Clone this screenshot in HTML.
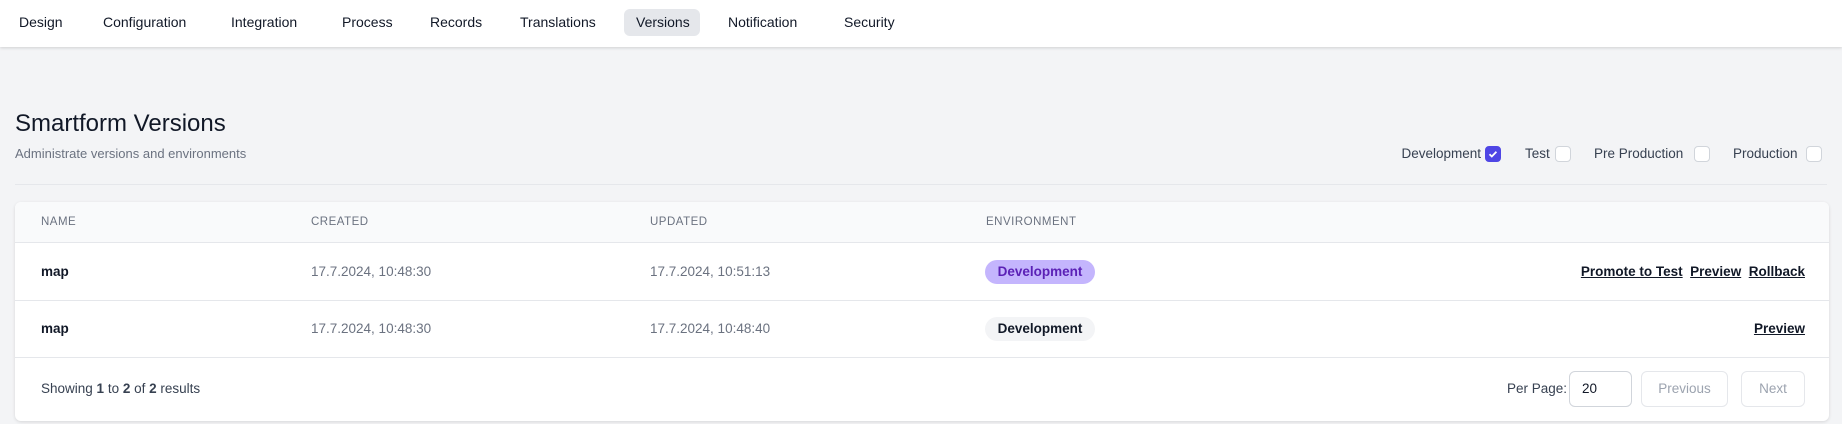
<!DOCTYPE html>
<html><head><meta charset="utf-8"><style>
*{box-sizing:border-box;margin:0;padding:0}
body{width:1842px;height:424px;overflow:hidden;background:#f3f4f6;font-family:"Liberation Sans",sans-serif;color:#111827;position:relative}
.nav{position:absolute;left:0;top:0;width:1842px;height:47px;background:#fff;box-shadow:0 1px 3px rgba(0,0,0,.15)}
.tab{position:absolute;top:9px;height:27px;line-height:27px;font-size:14px;color:#111827}
.pill{background:#e5e7eb;border-radius:6px;padding:0 12px}
.abs{position:absolute;white-space:nowrap}
h1{position:absolute;left:15px;top:110px;font-size:24px;font-weight:normal;color:#111827}
.sub{left:15px;top:146px;font-size:13px;color:#6b7280}
.hr{position:absolute;left:15px;top:184px;width:1812px;height:1px;background:#e5e7eb}
.cb{position:absolute;top:146px;width:16px;height:16px;border:1px solid #d1d5db;border-radius:4px;background:#fff}
.lbl{top:146px;font-size:13.5px;color:#374151}
.card{position:absolute;left:15px;top:202px;width:1814px;height:219px;background:#fff;border-radius:6px;box-shadow:0 1px 3px rgba(0,0,0,.12);overflow:hidden}
.thead{position:absolute;left:0;top:0;width:100%;height:41px;background:#f9fafb;border-bottom:1px solid #e5e7eb}
.th{top:14px;font-size:11.5px;color:#6b7280;letter-spacing:.5px}
.line{position:absolute;left:0;width:100%;height:1px;background:#e5e7eb}
.td{font-size:13.5px;color:#6b7280}
.b{font-weight:bold;color:#111827}
.badge{position:absolute;left:970px;width:110px;height:24px;line-height:24px;text-align:center;border-radius:12px;font-size:13.5px;font-weight:bold}
.lnk{font-size:13.5px;font-weight:bold;color:#111827}
.lnk u{text-decoration:underline}
.btn{position:absolute;top:169px;height:36px;border:1px solid #e5e7eb;border-radius:6px;line-height:34px;text-align:center;font-size:13.5px;color:#9ca3af}
</style></head><body>
<div class="nav">
<span class="tab" style="left:19px">Design</span>
<span class="tab" style="left:103px">Configuration</span>
<span class="tab" style="left:231px">Integration</span>
<span class="tab" style="left:342px">Process</span>
<span class="tab" style="left:430px">Records</span>
<span class="tab" style="left:520px">Translations</span>
<span class="tab pill" style="left:624px;width:76px">Versions</span>
<span class="tab" style="left:728px">Notification</span>
<span class="tab" style="left:844px">Security</span>
</div>
<h1>Smartform Versions</h1>
<span class="abs sub">Administrate versions and environments</span>
<span class="abs lbl" style="right:361px">Development</span>
<div class="cb" style="left:1485px;background:#4f46e5;border-color:#4f46e5"><svg width="14" height="14" viewBox="0 0 14 14"><path d="M3.5 7.2l2.3 2.3 4.6-4.8" stroke="#fff" stroke-width="1.8" fill="none"/></svg></div>
<span class="abs lbl" style="left:1525px">Test</span>
<div class="cb" style="left:1555px"></div>
<span class="abs lbl" style="left:1594px">Pre Production</span>
<div class="cb" style="left:1694px"></div>
<span class="abs lbl" style="left:1733px">Production</span>
<div class="cb" style="left:1806px"></div>
<div class="hr"></div>
<div class="card">
<div class="thead">
<span class="abs th" style="left:26px">NAME</span>
<span class="abs th" style="left:296px">CREATED</span>
<span class="abs th" style="left:635px">UPDATED</span>
<span class="abs th" style="left:971px">ENVIRONMENT</span>
</div>
<span class="abs td b" style="left:26px;top:62px">map</span>
<span class="abs td" style="left:296px;top:62px">17.7.2024, 10:48:30</span>
<span class="abs td" style="left:635px;top:62px">17.7.2024, 10:51:13</span>
<div class="badge" style="top:58px;background:#c4b5fd;color:#5b21b6">Development</div>
<span class="abs lnk" style="right:24px;top:62px"><u>Promote to Test</u>&nbsp;&nbsp;<u>Preview</u>&nbsp;&nbsp;<u>Rollback</u></span>
<div class="line" style="top:98px"></div>
<span class="abs td b" style="left:26px;top:119px">map</span>
<span class="abs td" style="left:296px;top:119px">17.7.2024, 10:48:30</span>
<span class="abs td" style="left:635px;top:119px">17.7.2024, 10:48:40</span>
<div class="badge" style="top:115px;background:#f3f4f6;color:#111827">Development</div>
<span class="abs lnk" style="right:24px;top:119px"><u>Preview</u></span>
<div class="line" style="top:155px"></div>
<span class="abs" style="left:26px;top:179px;font-size:13.5px;color:#374151">Showing <b>1</b> to <b>2</b> of <b>2</b> results</span>
<span class="abs" style="left:1492px;top:179px;font-size:13.5px;color:#374151">Per Page:</span>
<div class="btn" style="left:1554px;width:63px;border-color:#d1d5db;text-align:left;padding-left:12px;color:#111827">20</div>
<div class="btn" style="left:1626px;width:87px">Previous</div>
<div class="btn" style="left:1726px;width:64px">Next</div>
</div>
</body></html>
